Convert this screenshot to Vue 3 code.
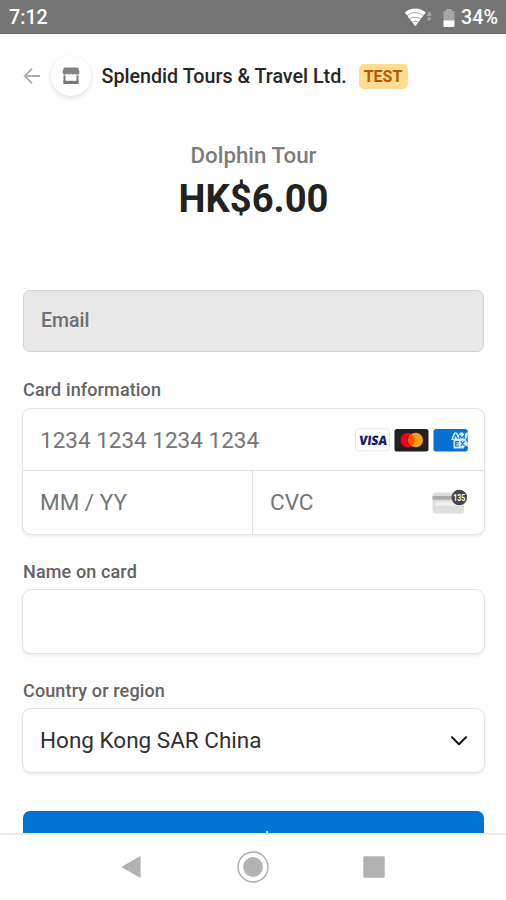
<script setup>
const cardNumber = '1234 1234 1234 1234'
</script>

<template>
  <div class="screen">
    <header class="status">
      <span class="clock">7:12</span>
      <div class="status-right">
        <svg class="wifi" width="30" height="20" viewBox="0 0 30 20">
          <path d="M0.8 4.6 C6.5 -0.9 16 -0.9 21.7 4.6 L11.3 18.2 Z" fill="#fff" />
          <path d="M2.8 8 C8 3.4 14.5 3.4 19.7 8 M5.5 11.4 C9 8.6 13.6 8.6 17 11.4 M8 14.4 C10 12.8 12.6 12.8 14.6 14.4" fill="none" stroke="#8c8c8c" stroke-width="0.8" />
          <path d="M23.2 6.2 L25.2 3 L27.2 6.2 V8.3 H23.2Z M23.2 9.6 H27.2 V11 L25.2 13.2 L23.2 11Z" fill="#a5a5a5" />
        </svg>
        <svg class="battery" width="12" height="20" viewBox="0 0 12 20">
          <path d="M3 1 H9 V3 H10.5 Q11.5 3 11.5 4 V13 H0.5 V4 Q0.5 3 1.5 3 H3Z" fill="#a6a6a6" />
          <path d="M0.5 12.5 H11.5 V18 Q11.5 19 10.5 19 H1.5 Q0.5 19 0.5 18Z" fill="#fff" />
        </svg>
        <span class="percent">34%</span>
      </div>
    </header>

    <main class="page">
      <div class="merchant">
        <svg class="back" width="18" height="18" viewBox="0 0 18 18" fill="none" stroke="#aaa" stroke-width="1.8">
          <path d="M17 9 H1.8 M9 1.7 L1.7 9 L9 16.3" />
        </svg>
        <div class="avatar">
          <svg width="18" height="18" viewBox="0 0 18 18">
            <path d="M2.8 0.5 H15.2 Q16.2 0.5 16.5 1.5 L17.4 5 Q17.4 7.7 15 7.7 Q13.4 7.7 12.8 6.6 Q12.2 7.7 10.8 7.7 Q9.5 7.7 9 6.6 Q8.5 7.7 7.2 7.7 Q5.8 7.7 5.2 6.6 Q4.6 7.7 3 7.7 Q0.6 7.7 0.6 5 L1.5 1.5 Q1.8 0.5 2.8 0.5Z" fill="#838383" />
            <path d="M2.5 8.5 V15.8 H15.5 V8.5" fill="none" stroke="#777" stroke-width="2" />
            <path d="M1.5 13.8 H16.5 V17 H1.5Z" fill="#777" />
          </svg>
        </div>
        <span class="merchant-name">Splendid Tours &amp; Travel Ltd.</span>
        <span class="badge">TEST</span>
      </div>

      <section class="summary">
        <div class="product">Dolphin Tour</div>
        <div class="price">HK$6.00</div>
      </section>

      <div class="email"><span>Email</span></div>

      <div class="label card-label">Card information</div>
      <div class="box card-box">
        <div class="card-row">
          <span class="hint number">{{ cardNumber }}</span>
          <div class="brands">
            <svg width="35" height="24" viewBox="0 0 35 24">
              <rect x="0.5" y="0.8" width="34" height="22" rx="3" fill="#fff" stroke="#e8e8e8" />
              <text x="19.4" y="16.6" text-anchor="middle" textLength="28" lengthAdjust="spacingAndGlyphs" transform="skewX(-6)" class="visa">VISA</text>
            </svg>
            <svg width="35" height="24" viewBox="0 0 35 24">
              <rect x="0.5" y="1" width="34" height="22.4" rx="2.5" fill="#211f20" />
              <circle cx="13.7" cy="12" r="7.3" fill="#eb001b" />
              <circle cx="21.7" cy="12" r="7.3" fill="#f79e1b" />
              <path d="M17.7 5.9 A7.3 7.3 0 0 1 17.7 18.1 A7.3 7.3 0 0 1 17.7 5.9Z" fill="#ff5f00" />
            </svg>
            <svg width="35" height="24" viewBox="0 0 35 24">
              <rect x="0.5" y="1" width="34.3" height="22.4" rx="2.5" fill="#0870d0" />
              <path d="M18 12 L21 4.5 H24 L25.5 7 L27 4.5 H30 L31.5 7 L33 4.5 H34.8 V7 L32.8 12 L34.8 15 V19 L32.5 17.5 L30.5 20.5 H20.5 V12Z" fill="#d5eaff" />
              <path d="M20.6 10.8 L22.7 6.6 L24.8 10.8 M26.8 11 V7.4 L29 10 L31.2 7.4 V11 M26 13.6 H22.7 V18 H26 M23 15.8 H25.5 M27.7 13.2 L31.5 18 M31.5 13.2 L27.7 18" fill="none" stroke="#0870d0" stroke-width="1.1" />
            </svg>
          </div>
        </div>
        <div class="split-row">
          <div class="cell expiry"><span class="hint">MM / YY</span></div>
          <div class="cell cvc">
            <span class="hint">CVC</span>
            <svg width="36" height="26" viewBox="0 0 36 26">
              <rect x="0.5" y="3.5" width="31.5" height="21" rx="3" fill="#dedede" />
              <rect x="0.5" y="7" width="31.5" height="3.7" fill="#aaa" />
              <rect x="3" y="13.2" width="27" height="3.4" fill="#f0f0f0" />
              <circle cx="27.3" cy="8.5" r="7.8" fill="#444" />
              <text x="27.2" y="11.6" text-anchor="middle" textLength="12" lengthAdjust="spacingAndGlyphs" class="digits">135</text>
            </svg>
          </div>
        </div>
      </div>

      <div class="label name-label">Name on card</div>
      <div class="box field"></div>

      <div class="label country-label">Country or region</div>
      <div class="box field">
        <span class="country">Hong Kong SAR China</span>
        <svg width="18" height="12" viewBox="0 0 18 12" fill="none" stroke="#1c1c1c" stroke-width="2.1" stroke-linecap="round" stroke-linejoin="round">
          <path d="M2 2.2 L9 9.2 L16 2.2" />
        </svg>
      </div>

      <button class="pay">Pay HK$6.00</button>
    </main>

    <nav class="nav">
      <svg width="22" height="26" viewBox="0 0 22 26"><path d="M1.3 13 L20 2.2 Q20.6 2 20.6 2.6 V23.4 Q20.6 24 20 23.8Z" fill="#b2b2b2" /></svg>
      <svg width="34" height="34" viewBox="0 0 34 34">
        <circle cx="17" cy="17" r="15" fill="none" stroke="#aaa" stroke-width="1.4" />
        <circle cx="17" cy="17" r="9.9" fill="#b2b2b2" />
      </svg>
      <svg width="22" height="22" viewBox="0 0 22 22"><rect x="0.3" y="0.3" width="21.4" height="21.4" rx="1.2" fill="#b2b2b2" /></svg>
    </nav>
  </div>
</template>

<style>
body { background: #fff; }
</style>

<style scoped>
.screen { width: 506px; height: 900px; display: flex; flex-direction: column; overflow: hidden; background: #fff; font-family: Roboto, sans-serif; }
.screen * { box-sizing: border-box; }
svg { display: block; flex: none; }
.status { flex: none; height: 34px; padding: 2px 8px 0 9px; display: flex; align-items: center; justify-content: space-between; background: #757575; border-bottom: 1px solid #666; color: #fff; font-weight: 500; font-size: 19.7px; }
.status-right { display: flex; align-items: center; }
.wifi { margin: 0 9px 0 0; }
.battery { margin-right: 6px; }
.page { flex: none; height: 799px; overflow: hidden; padding: 0 21px 0 22px; display: flex; flex-direction: column; }
.merchant { flex: none; height: 40px; margin-top: 22px; padding-left: 0.5px; display: flex; align-items: center; white-space: nowrap; }
.back { margin-right: 10px; }
.avatar { width: 40px; height: 40px; flex: none; border-radius: 50%; background: #fff; box-shadow: 0 2px 5px rgba(0, 0, 0, 0.13); display: flex; align-items: center; justify-content: center; margin-right: 11px; }
.merchant-name { font-size: 19.7px; font-weight: 500; color: #262626; width: 246px; margin-right: 11px; }
.badge { width: 49px; height: 25px; border-radius: 5px; background: #ffde92; color: #bb5504; font-size: 16px; font-weight: 700; line-height: 25px; text-align: center; }
.summary { flex: none; height: 194px; padding-top: 44px; text-align: center; }
.product { font-size: 22.3px; line-height: 30px; font-weight: 500; color: #7c7c7c; }
.price { font-size: 38.2px; line-height: 46px; margin-top: 6px; font-weight: 700; color: #222; }
.email { height: 62px; flex: none; margin: 0 1px; border: 1px solid #d2d2d2; border-radius: 7px; background: #e8e8e8; padding: 0 17px 1px; display: flex; align-items: center; font-size: 19.5px; font-weight: 500; color: #707070; }
.label { flex: none; padding-left: 1px; font-size: 18px; letter-spacing: 0.13px; line-height: 24px; font-weight: 500; color: #636363; }
.card-label { margin-top: 26px; }
.name-label { margin-top: 25px; }
.country-label { margin-top: 25px; }
.box { flex: none; border: 1.5px solid #e2e2e2; border-radius: 9px; background: #fff; box-shadow: 0 2px 3px rgba(0, 0, 0, 0.07); }
.card-box { height: 127px; margin-top: 6px; }
.card-row { height: 62px; display: flex; align-items: center; justify-content: space-between; padding: 0 16.5px 0 17px; border-bottom: 1px solid #e0e0e0; }
.brands { display: flex; gap: 4px; }
.hint { font-size: 22.5px; color: #757575; }
.split-row { height: 63px; display: flex; }
.cell { display: flex; align-items: center; justify-content: space-between; padding: 0 16px 2px 17px; }
.expiry { width: 230px; border-right: 1px solid #dedede; }
.cvc { flex: 1; }
.visa { font-family: "Open Sans", sans-serif; font-size: 13px; font-weight: 800; fill: #1a1a66; }
.digits { font-size: 8.5px; font-weight: 700; fill: #fff; }
.field { height: 65px; margin-top: 5px; padding: 0 16px 0 17px; display: flex; align-items: center; justify-content: space-between; }
.country { font-size: 22.5px; color: #303030; padding-bottom: 2px; }
.pay { flex: none; height: 60px; margin: 38px 1px 0; padding: 0; border: 0; border-radius: 7px; background: #0074d4; color: #fff; font-family: Roboto, sans-serif; font-size: 21px; font-weight: 500; }
.nav { flex: 1; padding: 0 121px 2px 120px; border-top: 2px solid #ececec; display: flex; align-items: center; justify-content: space-between; }
</style>
